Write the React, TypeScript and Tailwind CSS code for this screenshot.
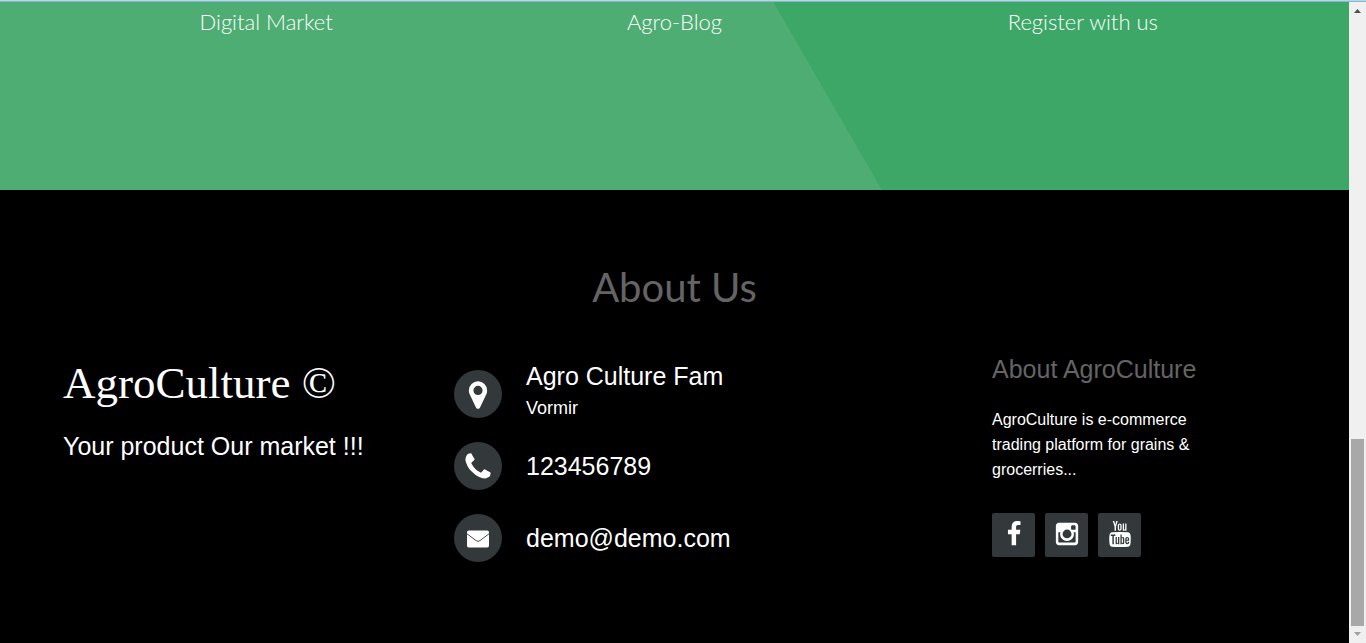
import React from "react";

type IconProps = { d: string; className: string };

const Icon = ({ d, className }: IconProps) => (
  <svg viewBox="0 0 1792 1792" fill="currentColor" aria-hidden="true" className={className}>
    <path d={d} />
  </svg>
);

const EnvelopeIcon = () => (
  <svg viewBox="0 0 22 18" aria-hidden="true" className="h-[18px] w-[22px]">
    <rect y="0.500" width="22" height="17" rx="1.800" fill="currentColor" />
    <path d="M0 3.800 9.200 10.700Q11 11.900 12.800 10.700L22 3.800" fill="none" stroke="#33383b" strokeWidth="0.900" />
  </svg>
);

const marker =
  "M1152 640q0-106-75-181t-181-75-181 75-75 181 75 181 181 75 181-75 75-181zm256 0q0 109-33 179l-364 774q-16 33-47.5 52t-67.5 19-67.5-19-46.5-52l-365-774q-33-70-33-179 0-212 150-362t362-150 362 150 150 362z";
const phone =
  "M1600 1240q0 27-10 70.5t-21 68.5q-21 50-122 106-94 51-186 51-27 0-53-3.5t-57.5-12.5-47-14.5-55.5-20.5-49-18q-98-35-175-83-127-79-264-216t-216-264q-48-77-83-175-3-9-18-49t-20.5-55.5-14.5-47-12.5-57.5-3.5-53q0-92 51-186 56-101 106-122 25-11 68.5-21t70.5-10q14 0 21 3 18 6 53 76 11 19 30 54t35 63.5 31 53.5q3 4 17.5 25t21.5 35.5 7 28.5q0 20-28.5 50t-62 55-62 53-28.5 46q0 9 5 22.5t8.5 20.5 14 24 11.5 19q76 137 174 235t235 174q2 1 19 11.5t24 14 20.5 8.5 22.5 5q18 0 46-28.5t53-62 55-62 50-28.5q14 0 28.5 7t35.5 21.5 25 17.5q25 15 53.5 31t63.5 35 54 30q70 35 76 53 3 7 3 21z";
const facebook =
  "M1343 12v264h-157q-86 0-116 36t-30 108v189h293l-39 296h-254v759h-306v-759h-255v-296h255v-218q0-186 104-288.5t277-102.5q147 0 228 12z";
const instagram =
  "M1490 1426v-648h-135q20 63 20 131 0 126-64 232.5t-174 168.5-240 62q-197 0-337-135.5t-140-327.5q0-68 20-131h-141v648q0 26 17.5 43.5t43.5 17.5h1069q25 0 43-17.5t18-43.5zm-284-533q0-124-90.5-211.5t-218.5-87.5q-127 0-217.5 87.5t-90.5 211.5 90.5 211.5 217.5 87.5q128 0 218.5-87.5t90.5-211.5zm284-360v-165q0-28-20-48.5t-49-20.5h-174q-29 0-49 20.5t-20 48.5v165q0 29 20 49t49 20h174q29 0 49-20t20-49zm174-208v1142q0 81-58 139t-139 58h-1142q-81 0-139-58t-58-139v-1142q0-81 58-139t139-58h1142q81 0 139 58t58 139z";
const youtube =
  "M1099 1244v211q0 67-39 67-23 0-45-22v-301q22-22 45-22 39 0 39 67zm338 1v46h-90v-46q0-68 45-68t45 68zm-966-218h107v-94h-312v94h105v569h100v-569zm288 569h89v-494h-89v378q-30 42-57 42-18 0-21-21-1-3-1-35v-364h-89v391q0 49 8 73 12 37 58 37 48 0 102-61v54zm429-148v-197q0-73-9-99-17-56-71-56-50 0-93 54v-217h-89v663h89v-48q45 55 93 55 54 0 71-55 9-27 9-100zm338-10v-13h-91q0 51-2 61-7 36-40 36-46 0-46-69v-87h179v-103q0-79-27-116-39-51-106-51-68 0-107 51-28 37-28 116v173q0 79 29 116 39 51 108 51 72 0 108-53 18-27 21-54 2-9 2-58zm-608-913v-210q0-69-43-69t-43 69v210q0 70 43 70t43-70zm719 751q0 234-26 350-14 59-58 99t-102 46q-184 21-555 21t-555-21q-58-6-102.5-46t-57.5-99q-26-112-26-350 0-234 26-350 14-59 58-99t103-47q183-20 554-20t555 20q58 7 102.5 47t57.5 99q26 112 26 350zm-998-1276h102l-121 399v271h-100v-271q-14-74-61-212-37-103-65-187h106l71 263zm370 333v175q0 81-28 118-38 51-106 51-67 0-105-51-28-38-28-118v-175q0-80 28-117 38-51 105-51 68 0 106 51 28 37 28 117zm335-162v499h-91v-55q-53 62-103 62-46 0-59-37-8-24-8-75v-394h91v367q0 33 1 35 3 22 21 22 27 0 57-43v-381h91z";

const features = ["Digital Market", "Agro-Blog", "Register with us"];

const socials = [
  { label: "Facebook", d: facebook },
  { label: "Instagram", d: instagram },
  { label: "YouTube", d: youtube },
];

const Contact = ({ icon, children }: { icon: React.ReactNode; children: React.ReactNode }) => (
  <li className="flex items-center gap-6">
    <span className="flex size-12 shrink-0 items-center justify-center rounded-full bg-[#33383b] pt-0.5">
      {icon}
    </span>
    {children}
  </li>
);

const Scrollbar = () => (
  <div className="flex w-[17px] shrink-0 flex-col items-center bg-[#f0f0f0]" aria-hidden="true">
    <svg viewBox="0 0 17 17" className="size-[17px]">
      <path d="M5 11h7L8.500 7z" fill="#505050" />
    </svg>
    <div className="grow-[420]" />
    <div className="w-[13px] grow-[187] bg-[#a8a8a8]" />
    <svg viewBox="0 0 17 17" className="size-[17px]">
      <path d="M5 6h7L8.500 10z" fill="#a0a0a0" />
    </svg>
  </div>
);

export default function App() {
  return (
    <div className="flex min-h-screen flex-col bg-black font-['Liberation_Sans',sans-serif] text-white">
      <div className="h-0.5 border-b border-[#8fb4c0] bg-[#a9dcf0]" />
      <div className="flex grow">
        <main className="min-w-0 grow">
          <section className="grid h-[188px] grid-cols-3 bg-[linear-gradient(60deg,#4ead73_60.5%,#3da767_60.5%)] px-[62px] pt-1 text-center font-['Lato',sans-serif] text-[22px] leading-8 font-light">
            {features.map((name) => (
              <h3 key={name}>{name}</h3>
            ))}
          </section>
          <footer className="pt-[71px]">
            <h2 className="text-center font-['Lato',sans-serif] text-[40px] leading-[52px] text-[#646464]">
              About Us
            </h2>
            <div className="grid grid-cols-[391fr_538fr_294fr] px-[63px] pt-9">
              <div className="pt-[7px]">
                <h1 className="font-['Liberation_Serif',serif] text-[45px] leading-[54px]">AgroCulture ©</h1>
                <p className="pt-5 text-[25px] leading-8">Your product Our market !!!</p>
              </div>
              <ul className="flex flex-col gap-6 pt-[21px] text-[25px] leading-8">
                <Contact icon={<Icon d={marker} className="size-8" />}>
                  <div className="-mt-2.5 -mb-1.5">
                    <p>Agro Culture Fam</p>
                    <p className="text-[18px]">Vormir</p>
                  </div>
                </Contact>
                <Contact icon={<Icon d={phone} className="size-8" />}>
                  <p>123456789</p>
                </Contact>
                <Contact icon={<EnvelopeIcon />}>
                  <a href="mailto:demo@demo.com">demo@demo.com</a>
                </Contact>
              </ul>
              <div className="pt-1">
                <h3 className="text-[25px] leading-8 text-[#646464]">About AgroCulture</h3>
                <p className="max-w-[220px] pt-[22px] text-base leading-[25px]">
                  AgroCulture is e-commerce trading platform for grains &amp; grocerries...
                </p>
                <div className="flex gap-2.5 pt-[31px]">
                  {socials.map(({ label, d }) => (
                    <a
                      key={label}
                      href="#"
                      aria-label={label}
                      className="flex h-11 w-[43px] items-center justify-center rounded-xs bg-[#33383b] pb-0.5"
                    >
                      <Icon d={d} className="size-[26px]" />
                    </a>
                  ))}
                </div>
              </div>
            </div>
          </footer>
        </main>
        <Scrollbar />
      </div>
    </div>
  );
}
